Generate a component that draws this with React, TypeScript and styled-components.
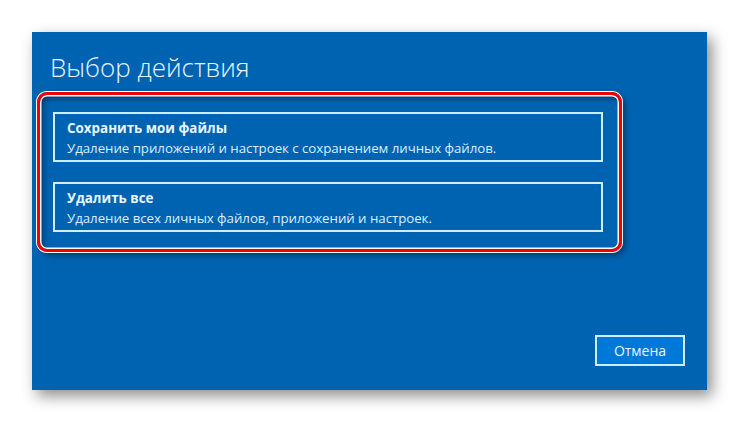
import React from 'react';
import styled, { createGlobalStyle } from 'styled-components';

interface Choice {
  id: string;
  title: string;
  text: string;
}

const GlobalStyle = createGlobalStyle`
  html, body {
    margin: 0;
    padding: 0;
    background: #ffffff;
  }
  body {
    font-family: "Open Sans", "Noto Sans", "Liberation Sans", sans-serif;
  }
`;

const Page = styled.div`
  width: 739px;
  height: 422px;
  padding: 32px 0 0 32px;
  box-sizing: border-box;
`;

const Panel = styled.div`
  width: 675px;
  height: 358px;
  background-color: #0063b1;
  box-shadow: 5px 6px 14px rgba(0, 0, 0, 0.45);
  display: flex;
  flex-direction: column;
  box-sizing: border-box;
  padding: 0 22px 24px 5px;
`;

const Title = styled.h1`
  margin: 0;
  padding: 17px 0 0 13px;
  height: 60px;
  box-sizing: border-box;
  font-family: "Open Sans", "Noto Sans", sans-serif;
  font-weight: 300;
  font-size: 26px;
  line-height: 36px;
  color: #e8f5ff;
`;

const Highlight = styled.div`
  width: 585px;
  height: 160px;
  box-sizing: border-box;
  border: 3px solid #f20000;
  border-radius: 10px;
  padding: 17px 16px 0 13px;
  display: flex;
  flex-direction: column;
  gap: 20px;
  box-shadow: 0 0 0 1px #ffffff, inset 0 0 0 1.5px #ffffff,
    inset 3px 3px 6px rgba(0, 0, 0, 0.45), 3px 3px 6px rgba(0, 0, 0, 0.45);
`;

const Option = styled.div`
  height: 50px;
  box-sizing: border-box;
  border: 2px solid #cdeeff;
  padding: 5px 12px 0;
  color: #eaf6ff;
`;

const OptionTitle = styled.div`
  font-family: "Open Sans", "Noto Sans", sans-serif;
  font-weight: 700;
  font-size: 13.4px;
  line-height: 19px;
`;

const OptionText = styled.div`
  font-family: "Open Sans", "Noto Sans", sans-serif;
  font-size: 13.3px;
  letter-spacing: -0.05px;
  line-height: 20px;
  color: #dcefff;
`;

const Footer = styled.div`
  margin-top: auto;
  display: flex;
  justify-content: flex-end;
`;

const CancelButton = styled.button`
  width: 90px;
  height: 31px;
  box-sizing: border-box;
  background-color: #0078d7;
  border: 2px solid #cdeeff;
  color: #eaf6ff;
  font-family: "Open Sans", "Noto Sans", sans-serif;
  font-size: 14px;
  padding: 0;
  cursor: pointer;
`;

const choices: Choice[] = [
  {
    id: '1',
    title: 'Сохранить мои файлы',
    text: 'Удаление приложений и настроек с сохранением личных файлов.',
  },
  {
    id: '2',
    title: 'Удалить все',
    text: 'Удаление всех личных файлов, приложений и настроек.',
  },
];

const App = () => {
  return (
    <Page>
      <GlobalStyle />
      <Panel>
        <Title>Выбор действия</Title>
        <Highlight>
          {choices.map((choice) => (
            <Option key={choice.id}>
              <OptionTitle>{choice.title}</OptionTitle>
              <OptionText>{choice.text}</OptionText>
            </Option>
          ))}
        </Highlight>
        <Footer>
          <CancelButton>Отмена</CancelButton>
        </Footer>
      </Panel>
    </Page>
  );
};

export default App;
